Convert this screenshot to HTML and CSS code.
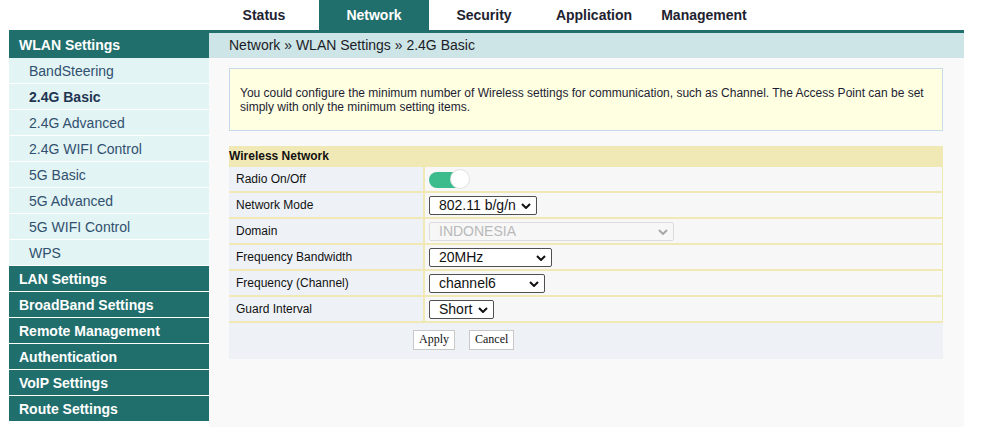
FILE: index.html
```html
<!DOCTYPE html>
<html>
<head>
<meta charset="utf-8">
<link rel="stylesheet" href="styles.css">
</head>
<body>
<div class="topnav">
  <div class="tab">Status</div>
  <div class="tab active">Network</div>
  <div class="tab">Security</div>
  <div class="tab">Application</div>
  <div class="tab">Management</div>
</div>
<div class="bar"></div>
<div class="layout">
  <div class="sidebar">
    <div class="sec open">WLAN Settings</div>
    <div class="sub">BandSteering</div>
    <div class="sub current">2.4G Basic</div>
    <div class="sub">2.4G Advanced</div>
    <div class="sub">2.4G WIFI Control</div>
    <div class="sub">5G Basic</div>
    <div class="sub">5G Advanced</div>
    <div class="sub">5G WIFI Control</div>
    <div class="sub">WPS</div>
    <div class="sec">LAN Settings</div>
    <div class="sec">BroadBand Settings</div>
    <div class="sec">Remote Management</div>
    <div class="sec">Authentication</div>
    <div class="sec">VoIP Settings</div>
    <div class="sec">Route Settings</div>
  </div>
  <div class="main">
    <div class="crumb">Network » WLAN Settings » 2.4G Basic</div>
    <div class="info">You could configure the minimum number of Wireless settings for communication, such as Channel. The Access Point can be set simply with only the minimum setting items.</div>
    <div class="form">
      <div class="formhead">Wireless Network</div>
      <table class="grid">
        <tr>
          <td class="lab">Radio On/Off</td>
          <td class="val"><span class="toggle"><span class="knob"></span></span></td>
        </tr>
        <tr>
          <td class="lab">Network Mode</td>
          <td class="val"><span class="selwrap"><select class="sel w-mode"><option>802.11 b/g/n</option></select><svg class="chev" width="10" height="6" viewBox="0 0 10 6"><path d="M1 1 L5 5 L9 1" fill="none" stroke="#111" stroke-width="2"/></svg></span></td>
        </tr>
        <tr>
          <td class="lab">Domain</td>
          <td class="val"><span class="selwrap"><select class="sel w-domain" disabled><option>INDONESIA</option></select><svg class="chev" width="10" height="6" viewBox="0 0 10 6"><path d="M1 1 L5 5 L9 1" fill="none" stroke="#a8a8a8" stroke-width="2"/></svg></span></td>
        </tr>
        <tr>
          <td class="lab">Frequency Bandwidth</td>
          <td class="val"><span class="selwrap"><select class="sel w-bw"><option>20MHz</option></select><svg class="chev" width="10" height="6" viewBox="0 0 10 6"><path d="M1 1 L5 5 L9 1" fill="none" stroke="#111" stroke-width="2"/></svg></span></td>
        </tr>
        <tr>
          <td class="lab">Frequency (Channel)</td>
          <td class="val"><span class="selwrap"><select class="sel w-ch"><option>channel6</option></select><svg class="chev" width="10" height="6" viewBox="0 0 10 6"><path d="M1 1 L5 5 L9 1" fill="none" stroke="#111" stroke-width="2"/></svg></span></td>
        </tr>
        <tr>
          <td class="lab">Guard Interval</td>
          <td class="val"><span class="selwrap"><select class="sel w-gi"><option>Short</option></select><svg class="chev" width="10" height="6" viewBox="0 0 10 6"><path d="M1 1 L5 5 L9 1" fill="none" stroke="#111" stroke-width="2"/></svg></span></td>
        </tr>
      </table>
      <div class="actions">
        <button class="btn">Apply</button>
        <button class="btn">Cancel</button>
      </div>
    </div>
  </div>
</div>
</body>
</html>
```
FILE: styles.css
```css
html, body {
  margin: 0;
  padding: 0;
  background: #ffffff;
  font-family: "Liberation Sans", Arial, sans-serif;
}
.topnav {
  display: flex;
  margin-left: 209px;
  height: 30px;
}
.tab {
  width: 110px;
  height: 30px;
  line-height: 30px;
  text-align: center;
  font-size: 14px;
  font-weight: bold;
  color: #1e2230;
}
.tab.active {
  background: #216f6d;
  color: #ffffff;
}
.bar {
  margin-left: 9px;
  width: 955px;
  height: 3px;
  background: #216f6d;
}
.layout {
  display: flex;
  margin-left: 9px;
  width: 955px;
}
.sidebar {
  width: 200px;
  flex: none;
}
.sec {
  height: 24px;
  padding-top: 1px;
  line-height: 25px;
  padding-left: 10px;
  background: #216f6d;
  color: #ffffff;
  font-size: 14px;
  font-weight: bold;
  border-bottom: 1px solid #ffffff;
}
.sec.open {
  height: 25px;
  padding-top: 0;
  border-bottom: none;
}
.sub {
  height: 24px;
  padding-top: 1px;
  line-height: 25px;
  padding-left: 20px;
  background: #e2f4f4;
  color: #31506f;
  font-size: 14px;
  border-bottom: 1px solid #ffffff;
}
.sub.current {
  font-weight: bold;
  color: #1f3552;
}
.main {
  flex: 1;
  background: #f9f9f9;
  min-height: 394px;
}
.crumb {
  height: 25px;
  line-height: 25px;
  padding-left: 20px;
  background: #cde5e6;
  color: #1c1c28;
  font-size: 14px;
}
.info {
  margin: 10px 21px 0 20px;
  padding: 17px 10px 16px 10px;
  border: 1px solid #c6dae8;
  background: #ffffe1;
  color: #1d1d33;
  font-size: 12px;
  line-height: 14px;
}
.form {
  margin: 15px 21px 0 20px;
}
.formhead {
  height: 21px;
  line-height: 21px;
  background: #f1e9b5;
  font-size: 12px;
  font-weight: bold;
  color: #111111;
}
.grid {
  width: 100%;
  border-collapse: collapse;
  font-size: 12px;
}
.grid td {
  height: 24px;
  padding: 0;
  border-bottom: 2px solid #f1e9b5;
}
.lab {
  width: 187px;
  padding-left: 7px !important;
  background: #eef2f7;
  color: #111111;
  border-right: 2px solid #f1e9b5;
}
.val {
  padding-left: 4px !important;
  background: #f7f7f7;
  border-right: 1px solid #f1e9b5;
}
.toggle {
  position: relative;
  display: inline-block;
  width: 38px;
  height: 16px;
  border-radius: 8px;
  background: #3cbb8d;
  vertical-align: middle;
  margin-top: 1px;
}
.knob {
  position: absolute;
  right: -2px;
  top: -2px;
  width: 18px;
  height: 18px;
  border-radius: 50%;
  background: #ffffff;
  box-shadow: 0 0 0 1px #e3e3e3;
}
.selwrap {
  position: relative;
  display: inline-block;
  vertical-align: middle;
  line-height: 0;
}
.sel {
  -webkit-appearance: none;
  appearance: none;
  display: block;
  height: 19px;
  margin: 0;
  padding: 0 20px 0 9px;
  border: 1px solid #505050;
  border-radius: 2px;
  background: #ffffff;
  font-family: "Liberation Sans", Arial, sans-serif;
  font-size: 14px;
  line-height: 17px;
  color: #111111;
}
.sel:disabled {
  color: #a0a0a0;
  border-color: #d2d2d2;
  background: #f7f7f7;
}
.chev {
  position: absolute;
  right: 6px;
  top: 7px;
  pointer-events: none;
}
.w-mode { width: 108px; }
.w-domain { width: 245px; }
.w-bw { width: 123px; }
.w-ch { width: 116px; }
.w-gi { width: 65px; }
.actions {
  display: flex;
  gap: 14px;
  height: 36px;
  align-items: flex-start;
  padding-left: 184px;
  background: #eef2f7;
}
.btn {
  height: 20px;
  margin-top: 7px;
  padding: 0 5px 2px 5px;
  line-height: 16px;
  border: 1px solid #c8c8c8;
  background: #ffffff;
  font-family: "Liberation Serif", "Times New Roman", serif;
  font-size: 12px;
  color: #111111;
}
```
